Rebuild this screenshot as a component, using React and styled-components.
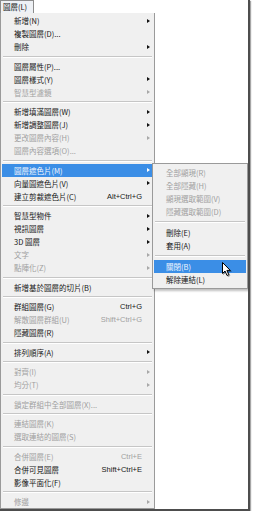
import React from 'react';
import styled, { createGlobalStyle } from 'styled-components';

const GlobalStyle = createGlobalStyle`
  html, body {
    margin: 0;
    padding: 0;
    background: #fff;
  }
  body {
    font-family: "Noto Sans CJK TC", "Noto Sans", sans-serif;
  }
`;

const Frame = styled.div`
  position: relative;
  width: 248px;
  height: 509px;
  background: #fff;
  border-right: 2px solid #4d4d4d;
  border-bottom: 2px solid #4d4d4d;
  box-shadow: 1px 1px 1px rgba(0, 0, 0, 0.35);
  overflow: hidden;
`;

const MenuTitle = styled.div`
  width: 34px;
  height: 13px;
  box-sizing: border-box;
  border: 1px solid #8c8c8c;
  border-bottom: none;
  background: #eef1f5;
  padding-left: 2px;
  font-size: 7.5px;
  line-height: 12px;
  color: #111;
  white-space: nowrap;
`;

const Menu = styled.div`
  width: 155px;
  height: 496px;
  box-sizing: border-box;
  background: #f0f0f0;
  border: 1px solid #9a9a9a;
  border-top: none;
  padding-top: 1px;
`;

const SubMenu = styled.div`
  position: absolute;
  left: 152px;
  top: 163px;
  width: 96px;
  box-sizing: border-box;
  background: #f0f0f0;
  border: 1px solid #9a9a9a;
  padding: 2px 0;
  box-shadow: 2px 2px 2px rgba(0, 0, 0, 0.25);
`;

const Item = styled.div`
  display: flex;
  align-items: center;
  height: 13px;
  margin: 0 1px;
  padding: 0 3px 0 12px;
  font-size: 7.5px;
  white-space: nowrap;
  color: ${(p) => (p.$active ? '#f4f8ff' : p.$disabled ? '#a0a0a0' : '#161616')};
  background: ${(p) => (p.$active ? '#3b8ee6' : 'transparent')};
`;

const Label = styled.span`
  flex: 1;
`;

const Shortcut = styled.span`
  font-family: "Liberation Sans", Arial, sans-serif;
  font-size: 7.5px;
  margin-right: 1px;
`;

const ArrowCell = styled.span`
  width: 7px;
  display: flex;
  justify-content: flex-end;
`;

const Arrow = styled.span`
  width: 0;
  height: 0;
  border-left: 3px solid ${(p) => (p.$active ? '#fff' : p.$disabled ? '#a8a8a8' : '#111')};
  border-top: 2.5px solid transparent;
  border-bottom: 2.5px solid transparent;
`;

const Separator = styled.div`
  height: 1px;
  margin: ${(p) => (p.$wide ? '3px 2px 3px' : '2.5px 2px 2px')};
  background: #c6c6c6;
  border-bottom: 1px solid #fff;
`;

const Cursor = styled.svg`
  position: absolute;
  left: 222px;
  top: 262px;
  filter: drop-shadow(1px 1px 0.6px rgba(0, 0, 0, 0.35));
`;

const mainMenu = [
  [
    { label: '新增(N)', arrow: true },
    { label: '複製圖層(D)...' },
    { label: '刪除', arrow: true },
  ],
  [
    { label: '圖層屬性(P)...' },
    { label: '圖層樣式(Y)', arrow: true },
    { label: '智慧型濾鏡', arrow: true, disabled: true },
  ],
  [
    { label: '新增填滿圖層(W)', arrow: true },
    { label: '新增調整圖層(J)', arrow: true },
    { label: '更改圖層內容(H)', arrow: true, disabled: true },
    { label: '圖層內容選項(O)...', disabled: true },
  ],
  [
    { label: '圖層遮色片(M)', arrow: true, active: true },
    { label: '向量圖遮色片(V)', arrow: true },
    { label: '建立剪裁遮色片(C)', shortcut: 'Alt+Ctrl+G' },
  ],
  [
    { label: '智慧型物件', arrow: true },
    { label: '視訊圖層', arrow: true },
    { label: '3D 圖層', arrow: true },
    { label: '文字', arrow: true, disabled: true },
    { label: '點陣化(Z)', arrow: true, disabled: true },
  ],
  [{ label: '新增基於圖層的切片(B)' }],
  [
    { label: '群組圖層(G)', shortcut: 'Ctrl+G' },
    { label: '解散圖層群組(U)', shortcut: 'Shift+Ctrl+G', disabled: true },
    { label: '隱藏圖層(R)' },
  ],
  [{ label: '排列順序(A)', arrow: true }],
  [
    { label: '對齊(I)', arrow: true, disabled: true },
    { label: '均分(T)', arrow: true, disabled: true },
  ],
  [{ label: '鎖定群組中全部圖層(X)...', disabled: true }],
  [
    { label: '連結圖層(K)', disabled: true },
    { label: '選取連結的圖層(S)', disabled: true },
  ],
  [
    { label: '合併圖層(E)', shortcut: 'Ctrl+E', disabled: true },
    { label: '合併可見圖層', shortcut: 'Shift+Ctrl+E' },
    { label: '影像平面化(F)' },
  ],
  [{ label: '修邊', arrow: true, disabled: true }],
];

const maskMenu = [
  [
    { label: '全部顯現(R)', disabled: true },
    { label: '全部隱藏(H)', disabled: true },
    { label: '顯現選取範圍(V)', disabled: true },
    { label: '隱藏選取範圍(D)', disabled: true },
  ],
  [{ label: '刪除(E)' }, { label: '套用(A)' }],
  [{ label: '關閉(B)', active: true }, { label: '解除連結(L)' }],
];

const MenuGroups = ({ groups, wide, arrows }) =>
  groups.map((group, gi) => (
    <React.Fragment key={gi}>
      {gi > 0 && <Separator $wide={wide} />}
      {group.map((it) => (
        <Item key={it.label} $active={it.active} $disabled={it.disabled}>
          <Label>{it.label}</Label>
          {it.shortcut && <Shortcut>{it.shortcut}</Shortcut>}
          {arrows && (
            <ArrowCell>
              {it.arrow && <Arrow $active={it.active} $disabled={it.disabled} />}
            </ArrowCell>
          )}
        </Item>
      ))}
    </React.Fragment>
  ));

const App = () => {
  return (
    <>
      <GlobalStyle />
      <Frame>
        <MenuTitle>圖層(L)</MenuTitle>
        <Menu>
          <MenuGroups groups={mainMenu} arrows />
        </Menu>
        <SubMenu>
          <MenuGroups groups={maskMenu} wide />
        </SubMenu>
        <Cursor width="10" height="15" viewBox="0 0 10 15">
          <path
            d="M0.5 0.5 L0.5 11.5 L3 9 L5 13.5 L6.8 12.7 L4.9 8.4 L8.3 8.4 Z"
            fill="#fff"
            stroke="#000"
            strokeWidth="1"
            strokeLinejoin="miter"
          />
        </Cursor>
      </Frame>
    </>
  );
};

export default App;
